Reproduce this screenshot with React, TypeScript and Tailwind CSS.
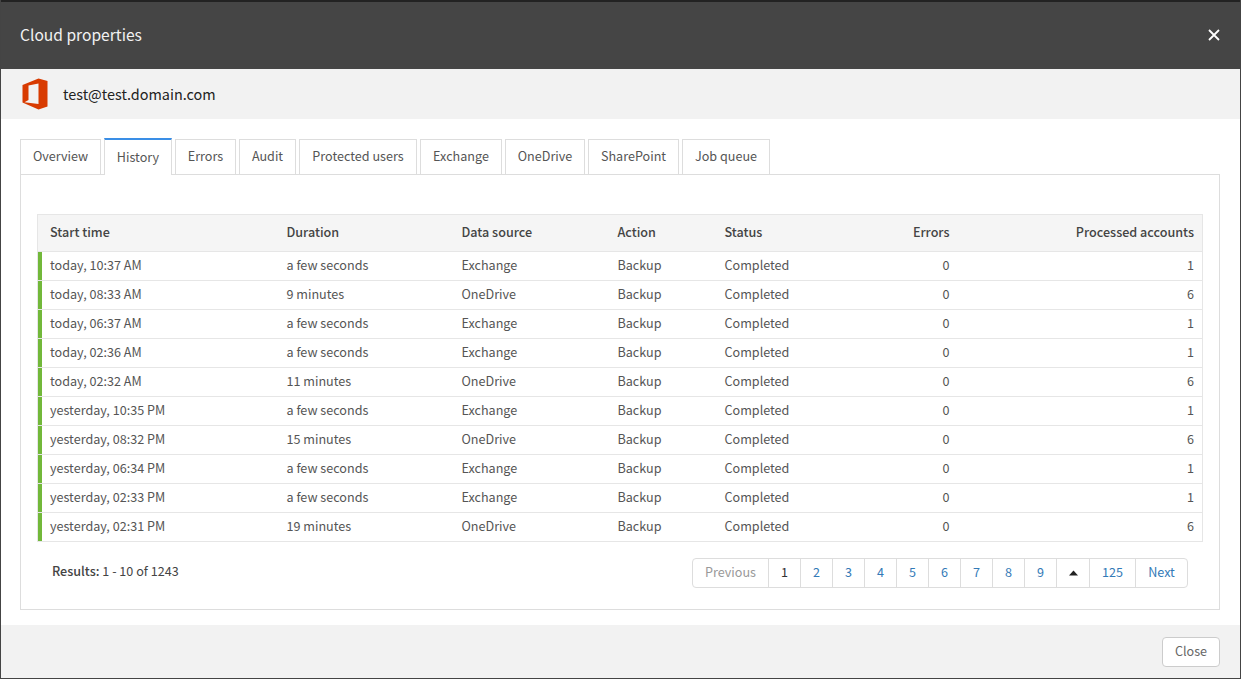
const tabs = [
  { label: "Overview", width: "w-[81px]" },
  { label: "History", width: "w-[68px]", active: true },
  { label: "Errors", width: "w-[61px]" },
  { label: "Audit", width: "w-[57px]" },
  { label: "Protected users", width: "w-[118px]" },
  { label: "Exchange", width: "w-[82px]" },
  { label: "OneDrive", width: "w-[80px]" },
  { label: "SharePoint", width: "w-[91px]" },
  { label: "Job queue", width: "w-[88px]" },
]

const rows = [
  ["today, 10:37 AM", "a few seconds", "Exchange", "1"],
  ["today, 08:33 AM", "9 minutes", "OneDrive", "6"],
  ["today, 06:37 AM", "a few seconds", "Exchange", "1"],
  ["today, 02:36 AM", "a few seconds", "Exchange", "1"],
  ["today, 02:32 AM", "11 minutes", "OneDrive", "6"],
  ["yesterday, 10:35 PM", "a few seconds", "Exchange", "1"],
  ["yesterday, 08:32 PM", "15 minutes", "OneDrive", "6"],
  ["yesterday, 06:34 PM", "a few seconds", "Exchange", "1"],
  ["yesterday, 02:33 PM", "a few seconds", "Exchange", "1"],
  ["yesterday, 02:31 PM", "19 minutes", "OneDrive", "6"],
]

const pages = ["2", "3", "4", "5", "6", "7", "8", "9"]

function OfficeLogo() {
  return (
    <svg width="26" height="32" viewBox="0 0 26 32" aria-hidden="true">
      <path
        fill="#d83b01"
        fillRule="evenodd"
        d="M0.5 24.500V7L16.500 0.500L25.500 3V28.500L16.500 31.500ZM6.500 7.500L16.500 5.500V26L2.500 24.200L6.500 22Z"
      />
    </svg>
  )
}

export default function App() {
  return (
    <div className="h-[679px] w-[1241px] overflow-hidden bg-white font-['Noto_Sans_CJK_SC','Noto_Sans',sans-serif] text-[12.6px] text-[#555]">
      <div className="flex h-full flex-col border-x border-b border-[#444]">
        <div className="flex h-[69px] shrink-0 items-center justify-between border-t-2 border-[#222] bg-[#454545] pb-[2px] pl-[19px] pr-5">
          <h1 className="text-[15.6px] text-[#f2f2f2]">Cloud properties</h1>
          <svg width="12" height="12" viewBox="0 0 12 12" aria-hidden="true">
            <path d="M1 1l10 10M11 1L1 11" stroke="#fff" strokeWidth="1.800" />
          </svg>
        </div>

        <div className="flex h-[50px] shrink-0 items-center gap-[15px] bg-[#f2f2f2] pl-[21px]">
          <OfficeLogo />
          <span className="pb-px text-[14.45px] text-[#222]">test@test.domain.com</span>
        </div>

        <div className="flex-1 pl-[19px] pr-5 pt-[19px]">
          <div className="relative z-10 flex h-[37px] gap-[3px]">
            {tabs.map((tab) => (
              <div
                key={tab.label}
                className={
                  tab.active
                    ? `${tab.width} flex h-[37px] items-center justify-center border-x border-[#ddd] border-t-2 border-t-[#3a8ee6] bg-white`
                    : `${tab.width} mt-px flex h-[36px] items-center justify-center border border-[#ddd] bg-white pb-px`
                }
              >
                {tab.label}
              </div>
            ))}
          </div>

          <div className="-mt-px h-[436px] border border-[#ddd] px-4 pt-[39px]">
            <table className="w-[1166px] table-fixed border-collapse">
              <colgroup>
                <col className="w-[237px]" />
                <col className="w-[175px]" />
                <col className="w-[156px]" />
                <col className="w-[107px]" />
                <col className="w-[122px]" />
                <col className="w-[124px]" />
                <col />
              </colgroup>
              <thead>
                <tr className="h-[37px] border border-[#e6e6e6] bg-[#f5f5f5] text-[#444]">
                  <th className="pb-[2px] pl-3 text-left font-medium">Start time</th>
                  <th className="pb-[2px] pl-3 text-left font-medium">Duration</th>
                  <th className="pb-[2px] pl-3 text-left font-medium">Data source</th>
                  <th className="pb-[2px] pl-3 text-left font-medium">Action</th>
                  <th className="pb-[2px] pl-3 text-left font-medium">Status</th>
                  <th className="pb-[2px] pr-[9px] text-right font-medium">Errors</th>
                  <th className="pb-[2px] pr-2 text-right font-medium">Processed accounts</th>
                </tr>
              </thead>
              <tbody>
                {rows.map((row) => (
                  <tr key={row[0]} className="h-[29px] border-x border-b border-[#e6e6e6]">
                    <td className="relative pb-[2px] pl-3">
                      <span className="absolute inset-y-0 left-0 w-1 bg-[#72b83a]" />
                      {row[0]}
                    </td>
                    <td className="pb-[2px] pl-3">{row[1]}</td>
                    <td className="pb-[2px] pl-3">{row[2]}</td>
                    <td className="pb-[2px] pl-3">Backup</td>
                    <td className="pb-[2px] pl-3">Completed</td>
                    <td className="pb-[2px] pr-[9px] text-right">0</td>
                    <td className="pb-[2px] pr-2 text-right">{row[3]}</td>
                  </tr>
                ))}
              </tbody>
            </table>

            <div className="mt-4 flex items-center justify-between px-[15px]">
              <div className="-mt-[4px] text-[#444]">
                <span className="font-medium">Results:</span> 1 - 10 of 1243
              </div>
              <div className="flex h-[30px] divide-x divide-[#ddd] rounded border border-[#ddd]">
                <span className="flex w-[76px] items-center justify-center pb-px text-[#999]">Previous</span>
                <span className="flex w-[32px] items-center justify-center pb-px text-[#333]">1</span>
                {pages.map((page) => (
                  <span key={page} className="flex w-[32px] items-center justify-center pb-px text-[#337ab7]">
                    {page}
                  </span>
                ))}
                <span className="flex w-[33px] items-center justify-center">
                  <svg width="9" height="6" viewBox="0 0 9 6" aria-hidden="true">
                    <path d="M4.500 0.500L9 5.500H0z" fill="#222" />
                  </svg>
                </span>
                <span className="flex w-[46px] items-center justify-center pb-px text-[#337ab7]">125</span>
                <span className="flex w-[51px] items-center justify-center pb-px text-[#337ab7]">Next</span>
              </div>
            </div>
          </div>
        </div>

        <div className="flex h-[53px] shrink-0 items-center justify-end bg-[#f2f2f2] pr-5">
          <button className="h-[30px] w-[58px] rounded border border-[#ccc] bg-white pb-px text-[#666]">Close</button>
        </div>
      </div>
    </div>
  )
}
